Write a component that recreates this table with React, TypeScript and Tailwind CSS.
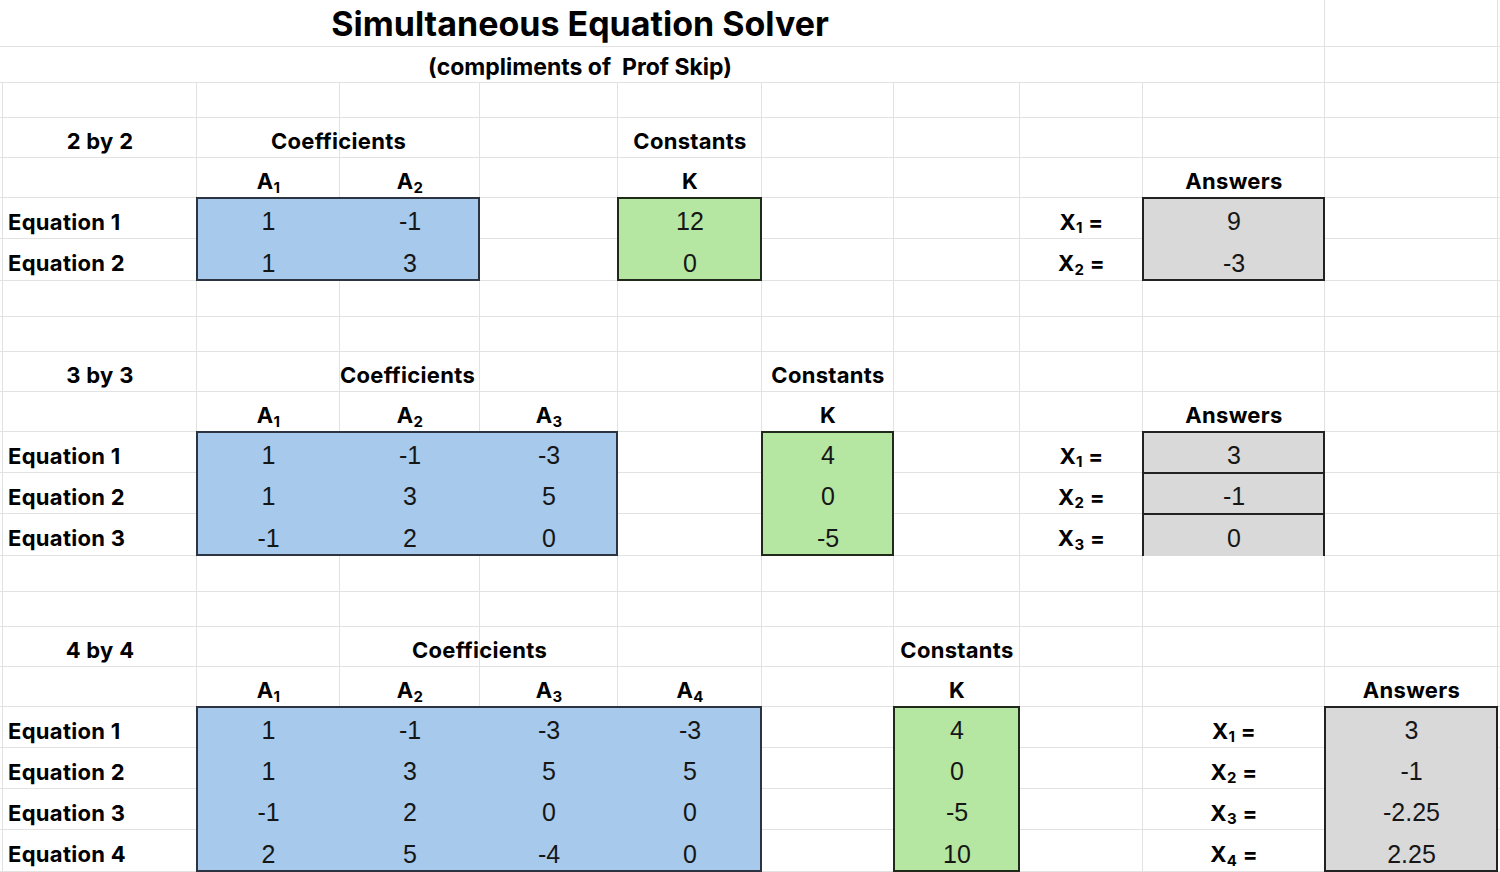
import React from "react";

// grid line helpers, written out in full so tailwind picks them up
const COL = ["", "col-start-1", "col-start-2", "col-start-3", "col-start-4", "col-start-5", "col-start-6", "col-start-7", "col-start-8", "col-start-9", "col-start-10", "col-start-11", "col-start-12"];
const ROW = ["", "row-start-1", "row-start-2", "row-start-3", "row-start-4", "row-start-5", "row-start-6", "row-start-7", "row-start-8", "row-start-9", "row-start-10", "row-start-11", "row-start-12", "row-start-13", "row-start-14", "row-start-15", "row-start-16", "row-start-17", "row-start-18", "row-start-19", "row-start-20", "row-start-21", "row-start-22"];
const CSPAN = ["", "", "col-span-2", "col-span-3", "col-span-4"];
const RSPAN = ["", "", "row-span-2", "row-span-3", "row-span-4"];

const head = "font-['Inter',sans-serif] font-bold text-[22px] tracking-[0.3px] text-black leading-none";
const num = "font-['Liberation_Sans',Arial,sans-serif] text-[25px] text-[#161616] leading-none";
const subCls = "relative top-[6px] text-[15px] leading-none";

type Section = {
    top: number;
    title: string;
    a: Array<Array<number>>;
    k: Array<number>;
    x: Array<string | number>;
    xCol: number;
    ansCol: number;
    splitAnswers?: boolean;
};

const sections: Array<Section> = [
    { top: 4, title: "2 by 2", a: [[1, -1], [1, 3]], k: [12, 0], x: [9, -3], xCol: 9, ansCol: 10 },
    { top: 10, title: "3 by 3", a: [[1, -1, -3], [1, 3, 5], [-1, 2, 0]], k: [4, 0, -5], x: [3, -1, 0], xCol: 9, ansCol: 10, splitAnswers: true },
    { top: 17, title: "4 by 4", a: [[1, -1, -3, -3], [1, 3, 5, 5], [-1, 2, 0, 0], [2, 5, -4, 0]], k: [4, 0, -5, 10], x: [3, -1, "-2.25", "2.25"], xCol: 10, ansCol: 11 },
];

function Cell({ c, r, cs = 1, className = "", children }: { c: number; r: number; cs?: number; className?: string; children: React.ReactNode }) {
    return (
        <div className={`${COL[c]} ${ROW[r]} ${CSPAN[cs]} z-10 flex items-center justify-center pt-[6px] whitespace-nowrap ${className}`}>
            {children}
        </div>
    );
}

function Box({ c, r, cs = 1, rs = 1, className }: { c: number; r: number; cs?: number; rs?: number; className: string }) {
    return <div className={`${COL[c]} ${ROW[r]} ${CSPAN[cs]} ${RSPAN[rs]} -ml-px -mt-px ${className}`} />;
}

function Block({ s }: { s: Section }) {
    const n = s.a.length;
    const kCol = 3 + n + 1;
    const first = s.top + 2;

    return (
        <>
            {/* fills */}
            <Box c={3} r={first} cs={n} rs={n} className="bg-[#a6c9ec] border-2 border-[#2b3440]" />
            <Box c={kCol} r={first} rs={n} className="bg-[#b5e6a2] border-2 border-[#1f2a1a]" />
            {s.splitAnswers ? (
                s.x.map((_, i) => (
                    <Box key={i} c={s.ansCol} r={first + i} className="bg-[#d9d9d9] border-2 border-b-0 border-[#222]" />
                ))
            ) : (
                <Box c={s.ansCol} r={first} rs={n} className="bg-[#d9d9d9] border-2 border-[#222]" />
            )}

            {/* headers */}
            <Cell c={2} r={s.top} className={head}>{s.title}</Cell>
            <Cell c={3} r={s.top} cs={n} className={head}>Coefficients</Cell>
            <Cell c={kCol} r={s.top} className={head}>Constants</Cell>
            {s.a.map((_, j) => (
                <Cell key={j} c={3 + j} r={s.top + 1} className={head}>
                    A<span className={subCls}>{j + 1}</span>
                </Cell>
            ))}
            <Cell c={kCol} r={s.top + 1} className={head}>K</Cell>
            <Cell c={s.ansCol} r={s.top + 1} className={head}>Answers</Cell>

            {/* rows */}
            {s.a.map((row, i) => (
                <React.Fragment key={i}>
                    <Cell c={2} r={first + i} className={`${head} justify-start pl-[5px]`}>Equation {i + 1}</Cell>
                    {row.map((v, j) => (
                        <Cell key={j} c={3 + j} r={first + i} className={num}>{v}</Cell>
                    ))}
                    <Cell c={kCol} r={first + i} className={num}>{s.k[i]}</Cell>
                    <Cell c={s.xCol} r={first + i} className={head}>
                        X<span className={subCls}>{i + 1}</span>&nbsp;=
                    </Cell>
                    <Cell c={s.ansCol} r={first + i} className={num}>{s.x[i]}</Cell>
                </React.Fragment>
            ))}
        </>
    );
}

export default function App() {
    const rows = Array.from({ length: 20 }, (_, i) => i + 3);
    const cols = Array.from({ length: 12 }, (_, i) => i + 1);

    return (
        <div className="w-[1500px] h-[872px] overflow-hidden bg-white grid grid-cols-[3px_194px_143px_140px_138px_144px_132px_126px_123px_182px_173px_2px] grid-rows-[47px_36px_35px_40px_40px_41px_42px_36px_35px_40px_40px_41px_41px_42px_36px_35px_40px_40px_41px_41px_41px_42px]">
            {/* title rows: merged across to column I */}
            {[1, 2].map((r) => (
                <React.Fragment key={r}>
                    <div className={`${COL[1]} ${ROW[r]} col-span-10 border-r border-b border-[#e2e2e2]`} />
                    <div className={`${COL[11]} ${ROW[r]} border-r border-b border-[#e2e2e2]`} />
                    <div className={`${COL[12]} ${ROW[r]} border-b border-[#e2e2e2]`} />
                </React.Fragment>
            ))}

            {/* sheet gridlines */}
            {rows.map((r) =>
                cols.map((c) => (
                    <div key={`${r}-${c}`} className={`${COL[c]} ${ROW[r]} border-b border-[#e2e2e2] ${c < 12 ? "border-r" : ""}`} />
                ))
            )}

            <div className={`${COL[1]} ${ROW[1]} col-span-10 z-10 flex items-center`}>
                <h1 className="w-[1160px] text-center pt-[1px] font-['Inter',sans-serif] font-bold text-[34px] leading-none text-black">
                    Simultaneous Equation Solver
                </h1>
            </div>
            <div className={`${COL[1]} ${ROW[2]} col-span-10 z-10 flex items-center`}>
                <p className="w-[1160px] text-center pt-[4px] whitespace-pre font-['Inter',sans-serif] font-bold text-[23px] leading-none text-black">
                    (compliments of  Prof Skip)
                </p>
            </div>

            {sections.map((s) => (
                <Block key={s.top} s={s} />
            ))}
        </div>
    );
}
